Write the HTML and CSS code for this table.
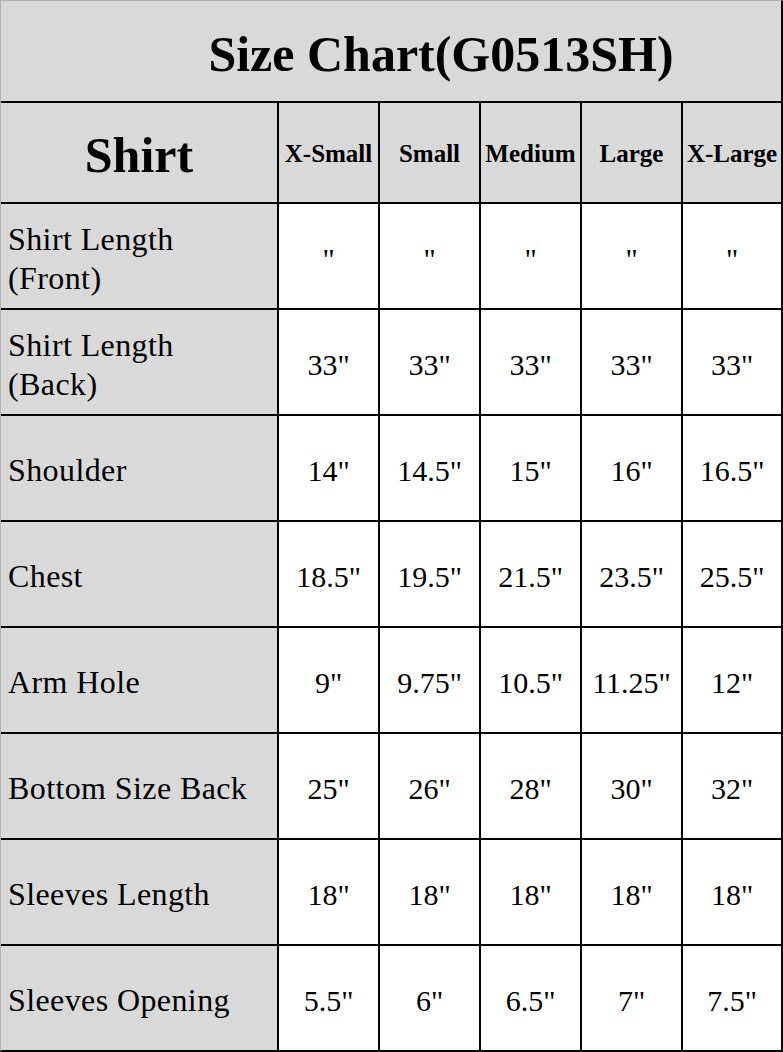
FILE: index.html
```html
<!DOCTYPE html>
<html>
<head>
<meta charset="utf-8">
<link rel="stylesheet" href="styles.css">
</head>
<body>
<div class="chart">
  <div class="title">Size Chart(G0513SH)</div>
  <div class="head main">Shirt</div>
  <div class="head">X-Small</div>
  <div class="head">Small</div>
  <div class="head">Medium</div>
  <div class="head">Large</div>
  <div class="head">X-Large</div>

  <div class="label">Shirt Length<br>(Front)</div>
  <div class="val">"</div><div class="val">"</div><div class="val">"</div><div class="val">"</div><div class="val">"</div>

  <div class="label">Shirt Length<br>(Back)</div>
  <div class="val">33"</div><div class="val">33"</div><div class="val">33"</div><div class="val">33"</div><div class="val">33"</div>

  <div class="label">Shoulder</div>
  <div class="val">14"</div><div class="val">14.5"</div><div class="val">15"</div><div class="val">16"</div><div class="val">16.5"</div>

  <div class="label">Chest</div>
  <div class="val">18.5"</div><div class="val">19.5"</div><div class="val">21.5"</div><div class="val">23.5"</div><div class="val">25.5"</div>

  <div class="label">Arm Hole</div>
  <div class="val">9"</div><div class="val">9.75"</div><div class="val">10.5"</div><div class="val">11.25"</div><div class="val">12"</div>

  <div class="label">Bottom Size Back</div>
  <div class="val">25"</div><div class="val">26"</div><div class="val">28"</div><div class="val">30"</div><div class="val">32"</div>

  <div class="label">Sleeves Length</div>
  <div class="val">18"</div><div class="val">18"</div><div class="val">18"</div><div class="val">18"</div><div class="val">18"</div>

  <div class="label">Sleeves Opening</div>
  <div class="val">5.5"</div><div class="val">6"</div><div class="val">6.5"</div><div class="val">7"</div><div class="val">7.5"</div>
</div>
</body>
</html>
```
FILE: styles.css
```css
html, body {
  margin: 0;
  padding: 0;
  background: #ffffff;
}

.chart {
  box-sizing: border-box;
  width: 783px;
  height: 1052px;
  display: grid;
  grid-template-columns: 276px 99px 99px 99px 99px 98px;
  grid-template-rows: 100px 99px repeat(8, 104px);
  gap: 2px;
  background: #000000;
  border-top: 1px solid #b0b0b0;
  border-left: 1px solid #b0b0b0;
  border-right: 2px solid #000000;
  border-bottom: 2px solid #000000;
  font-family: "Liberation Serif", "Times New Roman", serif;
  color: #000000;
}

.chart > div {
  display: flex;
  align-items: center;
  box-sizing: border-box;
}

.title {
  grid-column: 1 / -1;
  background: #d9d9d9;
  justify-content: center;
  padding-left: 100px;
  padding-top: 6px;
  font-weight: bold;
  font-size: 50px;
}

.head {
  background: #d9d9d9;
  justify-content: center;
  font-weight: bold;
  font-size: 25px;
  white-space: nowrap;
  padding-top: 2px;
}

.head.main {
  font-size: 50px;
  padding-top: 4px;
}

.label {
  background: #d9d9d9;
  font-size: 32px;
  line-height: 39px;
  letter-spacing: 0.4px;
  padding-left: 7px;
  padding-top: 5px;
}

.val {
  background: #ffffff;
  justify-content: center;
  font-size: 30px;
  padding-top: 6px;
}
```
